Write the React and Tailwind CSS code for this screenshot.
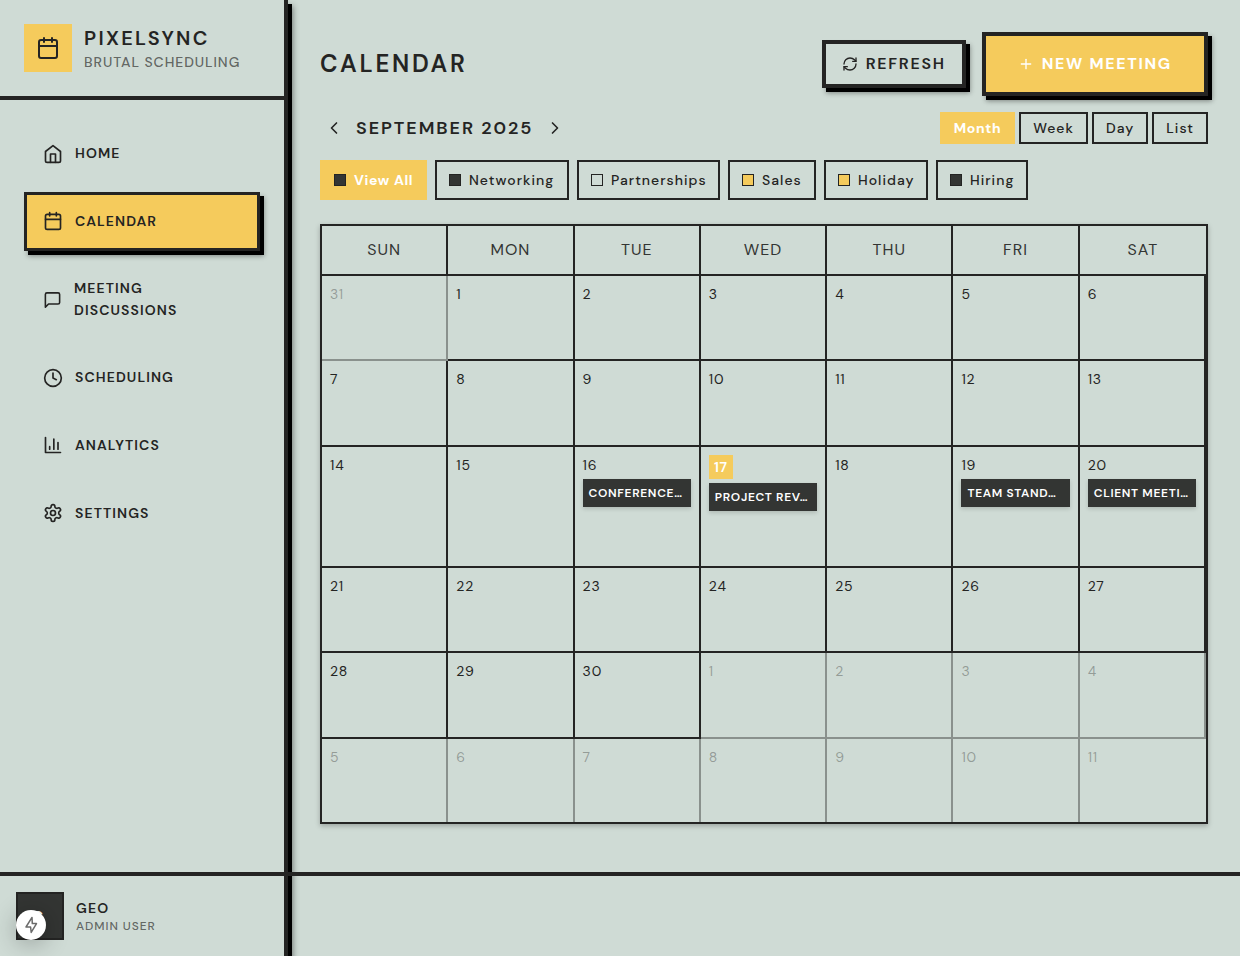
import { Plus, ChevronLeft, ChevronRight, RefreshCw, Clock } from "lucide-react";

const Svg = ({ className, children }) => (
  <svg
    viewBox="0 0 24 24"
    fill="none"
    stroke="currentColor"
    strokeWidth="2"
    strokeLinecap="round"
    strokeLinejoin="round"
    className={className}
  >
    {children}
  </svg>
);

const HomeIcon = ({ className }) => (
  <Svg className={className}>
    <path d="m3 9 9-7 9 7v11a2 2 0 0 1-2 2H5a2 2 0 0 1-2-2z" />
    <polyline points="9 22 9 12 15 12 15 22" />
  </Svg>
);

const CalendarIcon = ({ className }) => (
  <Svg className={className}>
    <path d="M8 2v4M16 2v4" />
    <rect width="18" height="18" x="3" y="4" rx="2" />
    <path d="M3 10h18" />
  </Svg>
);

const MessageIcon = ({ className }) => (
  <Svg className={className}>
    <path d="M21 15a2 2 0 0 1-2 2H7l-4 4V5a2 2 0 0 1 2-2h14a2 2 0 0 1 2 2z" />
  </Svg>
);

const ChartIcon = ({ className }) => (
  <Svg className={className}>
    <path d="M3 3v18h18M18 17V9M13 17V5M8 17v-3" />
  </Svg>
);

const SettingsIcon = ({ className }) => (
  <Svg className={className}>
    <path d="M12.22 2h-.44a2 2 0 0 0-2 2v.18a2 2 0 0 1-1 1.73l-.43.25a2 2 0 0 1-2 0l-.15-.08a2 2 0 0 0-2.73.73l-.22.38a2 2 0 0 0 .73 2.73l.15.1a2 2 0 0 1 1 1.72v.51a2 2 0 0 1-1 1.74l-.15.09a2 2 0 0 0-.73 2.73l.22.38a2 2 0 0 0 2.73.73l.15-.08a2 2 0 0 1 2 0l.43.25a2 2 0 0 1 1 1.73V20a2 2 0 0 0 2 2h.44a2 2 0 0 0 2-2v-.18a2 2 0 0 1 1-1.73l.43-.25a2 2 0 0 1 2 0l.15.08a2 2 0 0 0 2.73-.73l.22-.39a2 2 0 0 0-.73-2.73l-.15-.08a2 2 0 0 1-1-1.74v-.5a2 2 0 0 1 1-1.74l.15-.09a2 2 0 0 0 .73-2.73l-.22-.38a2 2 0 0 0-2.73-.73l-.15.08a2 2 0 0 1-2 0l-.43-.25a2 2 0 0 1-1-1.73V4a2 2 0 0 0-2-2z" />
    <circle cx="12" cy="12" r="3" />
  </Svg>
);

const BoltIcon = () => (
  <svg viewBox="0 0 30 30" className="size-[30px]" fill="none" stroke="#6b6b6b" strokeWidth="1.5" strokeLinejoin="round">
    <path d="M16 7.4 10 17h4.6l.6 5.4 5.3-8.8h-4.2z" />
  </svg>
);

const nav = [
  { label: "HOME", Icon: HomeIcon, size: "size-5" },
  { label: "CALENDAR", Icon: CalendarIcon, size: "size-5 mb-px", active: true },
  { label: "MEETING DISCUSSIONS", Icon: MessageIcon, size: "h-5 w-[19px]", tall: true },
  { label: "SCHEDULING", Icon: Clock, size: "size-5" },
  { label: "ANALYTICS", Icon: ChartIcon, size: "size-5 mb-px" },
  { label: "SETTINGS", Icon: SettingsIcon, size: "size-5 mb-px" },
];

const filters = [
  { label: "View All", swatch: "bg-[#333533]", width: "w-[107px]", active: true },
  { label: "Networking", swatch: "bg-[#333533]", width: "w-[134px]" },
  { label: "Partnerships", swatch: "bg-[#cfdbd5]", width: "w-[143px]" },
  { label: "Sales", swatch: "bg-[#f5cb5c]", width: "w-[88px]" },
  { label: "Holiday", swatch: "bg-[#f5cb5c]", width: "w-[104px]" },
  { label: "Hiring", swatch: "bg-[#333533]", width: "w-[92px]" },
];

const events = {
  16: "CONFERENCE…",
  17: "PROJECT REV…",
  19: "TEAM STAND…",
  20: "CLIENT MEETI…",
};

const cells = Array.from({ length: 42 }, (_, i) => {
  if (i === 0) return { day: 31, outside: true };
  if (i <= 30) return { day: i, event: events[i], today: i === 17 };
  return { day: i - 30, outside: true };
});

function DayCell({ cell, index }) {
  const lastRow = index >= 35;
  const right = index !== 41;
  return (
    <div
      className={`min-w-0 p-2 ${right ? "border-r-2" : ""} ${lastRow ? "" : "border-b-2"} ${
        cell.outside ? "border-[#8a918d]" : "border-[#242423]"
      }`}
    >
      {cell.today ? (
        <div className="flex size-6 items-center justify-center bg-[#f5cb5c] text-sm font-semibold tracking-[0.7px] text-white">
          {cell.day}
        </div>
      ) : (
        <div className={`text-sm leading-5 tracking-[0.8px] ${cell.outside ? "text-[#242423]/35" : "text-[#242423]"}`}>
          {cell.day}
        </div>
      )}
      {cell.event && (
        <div className="mt-1 h-7 bg-[#333533] px-1.5 text-xs leading-7 font-semibold tracking-[0.66px] whitespace-nowrap text-white shadow-[0_2px_4px_rgba(0,0,0,0.15)]">
          {cell.event}
        </div>
      )}
    </div>
  );
}

export default function App() {
  return (
    <div className="flex h-[956px] w-[1240px] overflow-hidden bg-[#cfdbd5] font-['DM_Sans',Inter,sans-serif] text-[#242423]">
      <aside className="relative z-10 flex w-72 shrink-0 flex-col border-r-4 border-[#242423] bg-[#cfdbd5] shadow-[4px_4px_0_#000,5px_6px_6px_rgba(0,0,0,0.45)]">
        <div className="flex h-[100px] items-center gap-3 border-b-4 border-[#242423] px-6">
          <div className="flex size-12 items-center justify-center bg-[#f5cb5c]">
            <CalendarIcon className="size-6" />
          </div>
          <div>
            <div className="text-xl leading-7 font-semibold tracking-[2.3px]">PIXELSYNC</div>
            <div className="text-sm leading-5 font-medium tracking-[0.93px] text-[#242423]/65">BRUTAL SCHEDULING</div>
          </div>
        </div>
        <nav className="flex flex-1 flex-col gap-[9px] p-6">
          {nav.map(({ label, Icon, size, active, tall }) => (
            <div
              key={label}
              className={`flex items-center gap-3 border-3 px-4 ${tall ? "h-[79px]" : "h-[59px]"} ${
                active
                  ? "border-[#242423] bg-[#f5cb5c] shadow-[4px_4px_0_#000,4px_5px_5px_rgba(0,0,0,0.4)]"
                  : "border-transparent"
              }`}
            >
              <Icon className={`shrink-0 ${size}`} />
              <span className="pb-0.5 text-sm leading-[22px] font-semibold tracking-[1.1px]">{label}</span>
            </div>
          ))}
        </nav>
        <div className="flex h-[84px] items-center gap-3 border-t-4 border-[#242423] px-4">
          <div className="relative size-12 border-2 border-[#242423] bg-[#333533]">
            <div className="flex size-full items-center justify-center pr-1 text-sm font-bold text-white">G</div>
            <div className="absolute top-4 -left-0.5 size-[30px] rounded-full bg-white shadow-[0_4px_24px_rgba(0,0,0,0.3)]">
              <BoltIcon />
            </div>
          </div>
          <div>
            <div className="text-sm leading-5 font-semibold tracking-[1.12px]">GEO</div>
            <div className="text-xs leading-4 font-medium tracking-[0.93px] text-[#242423]/65">ADMIN USER</div>
          </div>
        </div>
      </aside>

      <div className="flex min-w-0 flex-1 flex-col">
        <main className="flex-1 px-8 pt-8">
          <div className="flex h-16 items-center justify-between">
            <h1 className="text-2xl font-semibold tracking-[2.75px]">CALENDAR</h1>
            <div className="flex items-center gap-4">
              <button className="flex h-12 items-center gap-2 border-4 border-[#242423] bg-[#cfdbd5] px-4 text-base font-semibold tracking-[1.72px] shadow-[4px_4px_0_#000,4px_5px_5px_rgba(0,0,0,0.4)]">
                <RefreshCw className="size-4" />
                REFRESH
              </button>
              <button className="flex h-16 items-center gap-2 border-4 border-[#242423] bg-[#f5cb5c] px-8 text-base font-bold tracking-[1.67px] text-white shadow-[4px_4px_0_#000,4px_5px_5px_rgba(0,0,0,0.4)]">
                <Plus className="size-4" />
                NEW MEETING
              </button>
            </div>
          </div>

          <div className="mt-4 flex h-8 items-center justify-between">
            <div className="flex items-center gap-2">
              <button className="flex size-7 items-center justify-center">
                <ChevronLeft className="size-5" />
              </button>
              <h2 className="text-lg font-semibold tracking-[1.94px]">SEPTEMBER 2025</h2>
              <button className="flex size-7 items-center justify-center">
                <ChevronRight className="size-5" />
              </button>
            </div>
            <div className="flex gap-1 text-sm font-medium tracking-[1.03px]">
              <button className="h-8 bg-[#f5cb5c] px-3.5 font-bold tracking-[0.6px] text-white">Month</button>
              {["Week", "Day", "List"].map((v) => (
                <button key={v} className="h-8 border-2 border-[#242423] px-3">
                  {v}
                </button>
              ))}
            </div>
          </div>

          <div className="mt-4 flex gap-2 text-sm">
            {filters.map((f) => (
              <button
                key={f.label}
                className={`flex h-10 items-center gap-2 border-2 pl-3 whitespace-nowrap ${f.width} ${
                  f.active
                    ? "border-[#f5cb5c] bg-[#f5cb5c] font-bold tracking-[0.65px] text-white"
                    : "border-[#242423] font-medium tracking-[1.03px]"
                }`}
              >
                <span className={`size-3 shrink-0 border border-[#242423] ${f.swatch}`} />
                {f.label}
              </button>
            ))}
          </div>

          <section className="mt-6 h-[600px] border-2 border-[#242423] shadow-[0_2px_5px_rgba(0,0,0,0.25)]">
            <div className="grid h-[50px] grid-cols-7 text-base tracking-[1.05px] text-[#333533]">
              {["SUN", "MON", "TUE", "WED", "THU", "FRI", "SAT"].map((d) => (
                <div
                  key={d}
                  className="flex items-center justify-center border-r-2 border-b-2 border-[#242423] last:border-r-0"
                >
                  {d}
                </div>
              ))}
            </div>
            <div className="grid grid-cols-7 grid-rows-[85px_86px_121px_85px_86px_83px]">
              {cells.map((cell, i) => (
                <DayCell key={i} cell={cell} index={i} />
              ))}
            </div>
          </section>
        </main>
        <footer className="relative z-20 h-[84px] border-t-4 border-[#242423]" />
      </div>
    </div>
  );
}
